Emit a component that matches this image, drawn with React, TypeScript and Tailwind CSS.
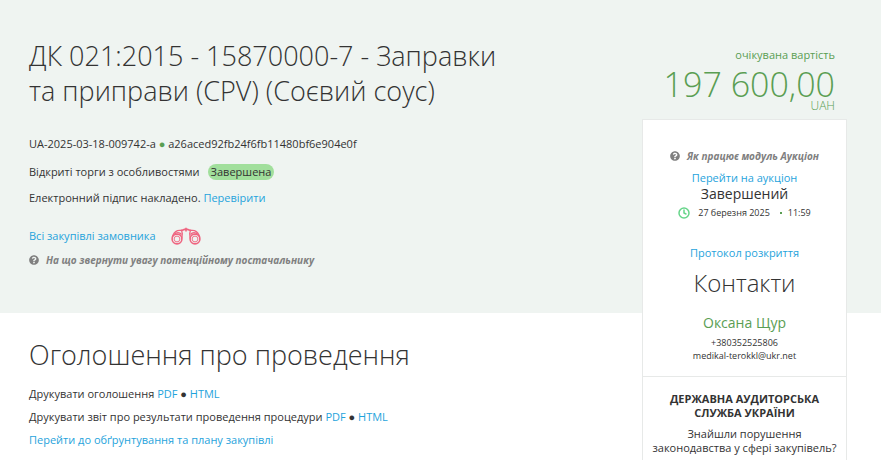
import { Clock } from 'lucide-react';
import { FaQuestionCircle } from 'react-icons/fa';

const Binoculars = () => (
  <svg viewBox="0 0 32 18" className="h-[18px] w-8" fill="none" stroke="#ef6580" aria-hidden="true">
    <circle cx="7" cy="12" r="4.9" strokeWidth="1.6" />
    <circle cx="7" cy="12" r="2.9" strokeWidth="0.9" />
    <circle cx="25" cy="12" r="4.9" strokeWidth="1.6" />
    <circle cx="25" cy="12" r="2.9" strokeWidth="0.9" />
    <path d="M2.2 10.5C3 7.5 5 4.5 7.5 3.6L11.5 3.2L12.3 6.5L11.8 11.5M29.8 10.5C29 7.5 27 4.5 24.5 3.6L20.5 3.2L19.7 6.5L20.2 11.5" strokeWidth="1.3" />
    <path d="M4.5 7.2C6.5 5.2 9.5 5 11.5 7.5M27.5 7.2C25.5 5.2 22.5 5 20.5 7.5" strokeWidth="1.4" />
    <path d="M11.5 3.4L14.5 2.4H17.5L20.5 3.4M16 0.8V4.4" strokeWidth="1.6" />
  </svg>
);

type LinkProps = { children: string; className?: string };

const BlueLink = ({ children, className = '' }: LinkProps) => (
  <a href="#" className={`text-[#1fa3dc] hover:underline ${className}`}>
    {children}
  </a>
);

const HelpLink = ({ children }: { children: string }) => (
  <a href="#" className="inline-flex items-center gap-[7px] text-[10px] leading-4 font-bold text-[#808080] italic">
    <FaQuestionCircle className="size-[10px]" />
    {children}
  </a>
);

const TenderInfo = () => (
  <header className="col-span-full row-start-1 bg-[#eff4f1] pt-[38px] pr-[250px] pb-[45px] pl-[29px]">
    <h1 className="max-w-[500px] text-[27px] leading-[35px] font-light">
      ДК 021:2015 - 15870000-7 - Заправки та приправи (CPV) (Соєвий соус)
    </h1>
    <p className="mt-7">
      UA-2025-03-18-009742-a <span className="text-[#5a9e53]">●</span> a26aced92fb24f6fb11480bf6e904e0f
    </p>
    <p className="mt-3 flex items-center gap-2">
      Відкриті торги з особливостями
      <span className="rounded-full bg-[#a1df9c] px-[3px]">Завершена</span>
    </p>
    <p className="mt-[10px]">
      Електронний підпис накладено. <BlueLink>Перевірити</BlueLink>
    </p>
    <div className="mt-5 flex h-5 items-center gap-[14px]">
      <BlueLink className="font-medium">Всі закупівлі замовника</BlueLink>
      <Binoculars />
    </div>
    <div className="mt-[6px] flex">
      <HelpLink>На що звернути увагу потенційному постачальнику</HelpLink>
    </div>
  </header>
);

const Announcement = () => (
  <main className="col-start-1 row-start-2 pt-6 pl-[29px]">
    <h2 className="text-[27px] leading-[35px] font-light">Оголошення про проведення</h2>
    <div className="mt-[14px] flex flex-col gap-[7px]">
      <p>
        Друкувати оголошення <BlueLink>PDF</BlueLink> ● <BlueLink>HTML</BlueLink>
      </p>
      <p>
        Друкувати звіт про результати проведення процедури <BlueLink>PDF</BlueLink> ● <BlueLink>HTML</BlueLink>
      </p>
      <p>
        <BlueLink>Перейти до обґрунтування та плану закупівлі</BlueLink>
      </p>
    </div>
  </main>
);

const Sidebar = () => (
  <aside className="col-start-2 row-span-2 row-start-1 mr-[34px] flex flex-col pt-[47px]">
    <div className="pr-3 text-right text-[#5a9e53]">
      <p>очікувана вартість</p>
      <p className="mt-[5px] text-[34px] leading-8 font-light whitespace-nowrap">197 600,00</p>
      <p className="text-xs leading-3 font-light">UAH</p>
    </div>

    <div className="mt-[7px] flex-1 border border-b-0 border-[#e7e9e8] bg-white text-center">
      <section className="flex flex-col items-center pt-7 pb-3">
        <HelpLink>Як працює модуль Аукціон</HelpLink>
        <BlueLink className="mt-[6px]">Перейти на аукціон</BlueLink>
        <p className="text-sm leading-4">Завершений</p>
        <p className="mt-[3px] flex items-center text-[9px] leading-4">
          <Clock className="mr-2 size-3 text-[#67d58a]" strokeWidth={3} />
          27 березня 2025
          <span className="mr-[6px] ml-[10px] size-[2px] bg-[#5a9e53]" />
          11:59
        </p>
        <BlueLink className="mt-6">Протокол розкриття</BlueLink>
        <h2 className="mt-1 text-2xl leading-[35px] font-light">Контакти</h2>
        <p className="mt-[13px] text-sm leading-5 text-[#5a9e53]">Оксана Щур</p>
        <p className="mt-[3px] text-[9px] leading-[13px]">+380352525806</p>
        <p className="text-[9px] leading-[13px]">medikal-terokkl@ukr.net</p>
      </section>

      <section className="mt-[2px] border-t border-[#e7e9e8] pt-[15px]">
        <h3 className="leading-[14px] font-bold">
          ДЕРЖАВНА АУДИТОРСЬКА
          <br />
          СЛУЖБА УКРАЇНИ
        </h3>
        <p className="mt-[7px] leading-[14px]">
          Знайшли порушення
          <br />
          законодавства у сфері закупівель?
        </p>
      </section>
    </div>
  </aside>
);

export default function App() {
  return (
    <div className="grid min-h-screen grid-cols-[1fr_239px] grid-rows-[auto_1fr] bg-white font-['Open_Sans',sans-serif] text-[11px] leading-4 text-[#333333]">
      <TenderInfo />
      <Announcement />
      <Sidebar />
    </div>
  );
}
